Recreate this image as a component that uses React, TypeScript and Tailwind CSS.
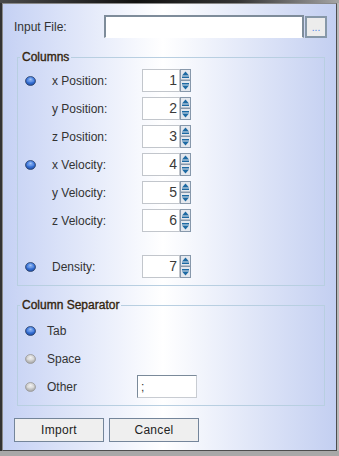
import React from 'react';

const font = { fontFamily: '"Liberation Sans", Arial, sans-serif' };

function Radio({ on }: { on: boolean }) {
    return (
        <svg width="11" height="10" viewBox="0 0 11 10">
            <defs>
                <radialGradient id={on ? 'rOn' : 'rOff'} cx="50%" cy="35%" r="60%">
                    <stop offset="0%" stopColor={on ? '#a9c8f5' : '#f4f4f4'} />
                    <stop offset="55%" stopColor={on ? '#3d78dc' : '#cfcfcf'} />
                    <stop offset="100%" stopColor={on ? '#1f4fa8' : '#a8a8a8'} />
                </radialGradient>
            </defs>
            <ellipse
                cx="5.5"
                cy="5"
                rx="5"
                ry="4.5"
                fill={`url(#${on ? 'rOn' : 'rOff'})`}
                stroke={on ? '#33466a' : '#9a9a9a'}
                strokeWidth="0.8"
            />
            <rect x="2" y="4.3" width="7" height="1.2" fill={on ? '#6f9ae6' : '#e6e6e6'} opacity="0.7" />
        </svg>
    );
}

function SpinArrows() {
    return (
        <svg width="11" height="23" viewBox="0 0 11 23">
            <rect x="0.5" y="0.5" width="10" height="10.5" fill="#e4e8ee" stroke="#8798ab" />
            <rect x="0.5" y="11.5" width="10" height="11" fill="#e4e8ee" stroke="#8798ab" />
            <polygon points="2,6.5 5.5,2.5 9,6.5" fill="#1d6aa3" />
            <rect x="2" y="7.5" width="7" height="1.5" fill="#1d6aa3" />
            <rect x="2" y="14" width="7" height="1.5" fill="#1d6aa3" />
            <polygon points="2,16.5 9,16.5 5.5,20.5" fill="#1d6aa3" />
        </svg>
    );
}

const columns = [
    { label: 'x Position:', value: 1, mark: true },
    { label: 'y Position:', value: 2, mark: false },
    { label: 'z Position:', value: 3, mark: false },
    { label: 'x Velocity:', value: 4, mark: true },
    { label: 'y Velocity:', value: 5, mark: false },
    { label: 'z Velocity:', value: 6, mark: false },
];

function SpinRow({ label, value, mark, className }: { label: string; value: number; mark: boolean; className?: string }) {
    return (
        <div className={`flex h-[23px] items-center ${className ?? ''}`}>
            <div className="flex w-[34px] items-center pl-[7px]">{mark && <Radio on />}</div>
            <div className="w-[90px] text-[12px] text-[#333]">{label}</div>
            <div className="flex h-[23px] w-[38px] items-center justify-end border border-[#c2c6cc] bg-white pr-[2px] text-[14px] text-[#3a3a3a]">
                {value}
            </div>
            <SpinArrows />
        </div>
    );
}

const legendCls =
    'ml-[2px] px-[2px] text-[12px] leading-[14px] text-[#33240e] [-webkit-text-stroke:0.35px_#33240e]';

export default function App() {
    return (
        <div className="flex h-[456px] w-[339px] flex-col bg-[#a9a9a9]" style={font}>
            <div className="h-[3px] bg-[linear-gradient(to_right,#4a4a4a,#111_40%,#333_70%,#a5a5a5)]" />
            <div className="flex flex-1">
                <div className="w-[2px] bg-[#333]" />
                <div className="flex flex-1 flex-col border border-[#8a8a8a] border-r-[#4d4d4d] border-b-[#4d4d4d] bg-[linear-gradient(to_right,#c5d1f4,#ffffff_48%,#c3cff1)]">
                    <div className="flex items-center pt-[11px]">
                        <div className="ml-[11px] w-[90px] text-[12px] text-[#333]">Input File:</div>
                        <div className="h-[23px] w-[200px] border-2 border-[#7e8c9a] border-b border-b-white bg-white" />
                        <div className="ml-[1px] mt-[1px] flex h-[22px] w-[22px] items-end justify-center border-2 border-[#8798a8] bg-[#ececec] pb-[3px] text-[10px] leading-none text-[#4a80e8]">
                            ...
                        </div>
                    </div>

                    <fieldset className="ml-[14px] mt-[12px] w-[308px] border border-[#b8cfe1] pb-[7px] pt-[5px]">
                        <legend className={legendCls}>Columns</legend>
                        {columns.map((c, i) => (
                            <SpinRow key={c.label} {...c} className={i > 0 ? 'mt-[5px]' : ''} />
                        ))}
                        <SpinRow label="Density:" value={7} mark className="mt-[23px]" />
                    </fieldset>

                    <fieldset className="ml-[14px] mt-[12px] w-[308px] border border-[#b8cfe1] pb-[7px] pt-[7px]">
                        <legend className={legendCls}>Column Separator</legend>
                        {['Tab', 'Space', 'Other'].map((s, i) => (
                            <div key={s} className={`flex h-[23px] items-center ${i > 0 ? 'mt-[5px]' : ''}`}>
                                <div className="flex w-[29px] items-center pl-[7px]">
                                    <Radio on={i === 0} />
                                </div>
                                <div className="w-[90px] text-[12px] text-[#333]">{s}</div>
                                {s === 'Other' && (
                                    <div className="flex h-[23px] w-[60px] items-center border border-[#7a8a9a] border-b-[#c8ccd2] border-r-[#c8ccd2] bg-white pl-[3px] text-[12px] text-[#333]">
                                        ;
                                    </div>
                                )}
                            </div>
                        ))}
                    </fieldset>

                    <div className="ml-[11px] mt-[12px] flex gap-[5px]">
                        {['Import', 'Cancel'].map((b) => (
                            <div
                                key={b}
                                className="flex h-[24px] w-[90px] items-center justify-center border border-[#74859a] bg-[#efefef] text-[12px] tracking-[0.3px] text-[#222]"
                            >
                                {b}
                            </div>
                        ))}
                    </div>
                </div>
                <div className="w-[2px] bg-[#b8b8b8]" />
            </div>
            <div className="h-[5px] bg-[#a8a8a8]" />
        </div>
    );
}
